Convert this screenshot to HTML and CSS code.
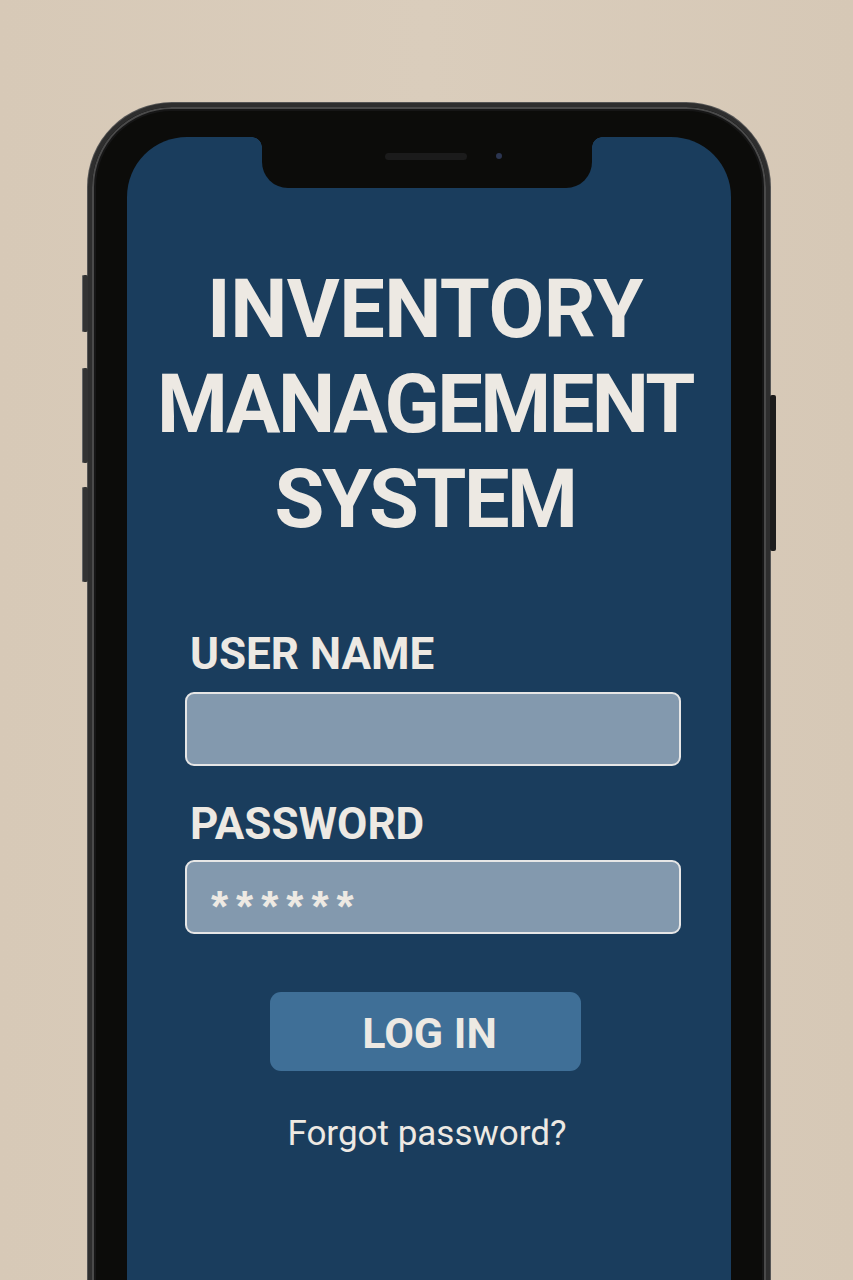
FILE: index.html
```html
<!DOCTYPE html>
<html lang="en">
<head>
<meta charset="utf-8">
<title>Inventory Management System</title>
<link rel="stylesheet" href="styles.css">
</head>
<body>
<div class="stage">
  <div class="phone">
    <span class="btn btn-l1"></span>
    <span class="btn btn-l2"></span>
    <span class="btn btn-l3"></span>
    <span class="btn btn-r1"></span>
    <div class="screen">
      <div class="notch">
        <span class="speaker"></span>
        <span class="camera"></span>
      </div>
      <h1 class="title"><span class="title-wide">INVENTORY</span><br>MANAGEMENT<br>SYSTEM</h1>
      <form class="form">
        <label class="label label-user">USER NAME</label>
        <div class="field"></div>
        <label class="label label-pw">PASSWORD</label>
        <div class="field field-pw">******</div>
        <div class="login">LOG IN</div>
        <div class="forgot">Forgot password?</div>
      </form>
    </div>
  </div>
</div>
</body>
</html>
```

FILE: styles.css
```css
html, body {
  margin: 0;
  padding: 0;
  height: 1280px;
  overflow: hidden;
  background: #d8cab8;
}

.stage {
  padding-top: 103px;
  padding-left: 88px;
  height: 1177px;
  overflow: hidden;
  background: linear-gradient(90deg, #d7c9b7 0%, #dacdbc 50%, #d6c8b6 100%);
}

.phone {
  position: relative;
  box-sizing: border-box;
  width: 682px;
  height: 1300px;
  border-radius: 84px;
  background: #0c0c0a;
  border: 4px solid #2e2e2e;
  box-shadow: inset 0 0 0 2px #4a4a4a, inset 0 0 0 4px #161616, 0 0 0 1px #555;
  padding: 30px 35px 0 35px;
}

.btn {
  position: absolute;
  width: 6px;
  background: #333;
  border-radius: 2px;
  box-shadow: inset 1px 0 0 #666;
}
.btn-l1 { left: -10px; top: 168px; height: 57px; }
.btn-l2 { left: -10px; top: 261px; height: 95px; }
.btn-l3 { left: -10px; top: 380px; height: 95px; }
.btn-r1 { right: -10px; top: 288px; height: 156px; background: #1c1c1c; box-shadow: none; }

.screen {
  position: relative;
  height: 1300px;
  border-radius: 60px 60px 0 0;
  background: #1a3d5d;
  display: flex;
  flex-direction: column;
  align-items: center;
  font-family: Roboto, "Liberation Sans", sans-serif;
  color: #ede9e3;
}

.notch {
  position: absolute;
  top: 0;
  left: 135px;
  width: 330px;
  height: 51px;
  background: #0c0c0a;
  border-radius: 0 0 26px 26px;
}
.notch::before, .notch::after {
  content: "";
  position: absolute;
  top: 0;
  width: 10px;
  height: 10px;
}
.notch::before { left: -10px; background: radial-gradient(circle at 0 100%, transparent 9.5px, #0c0c0a 10px); }
.notch::after { right: -10px; background: radial-gradient(circle at 100% 100%, transparent 9.5px, #0c0c0a 10px); }

.speaker {
  position: absolute;
  left: 123px;
  top: 16px;
  width: 82px;
  height: 7px;
  border-radius: 4px;
  background: #1b1b1b;
}
.camera {
  position: absolute;
  left: 234px;
  top: 16px;
  width: 6px;
  height: 6px;
  border-radius: 50%;
  background: #2b3550;
}

.title {
  margin: 125px 0 0 -8px;
  font-size: 81px;
  line-height: 95px;
  font-weight: 700;
  text-align: center;
  letter-spacing: -2.5px;
}
.title-wide { letter-spacing: -0.5px; }

.form {
  margin-top: 83px;
  width: 496px;
  margin-left: 8px;
  display: flex;
  flex-direction: column;
}

.label {
  font-size: 44px;
  font-weight: 700;
  line-height: 48px;
  padding-left: 5px;
}
.label-user { margin-bottom: 14px; }
.label-pw { margin-top: 34px; margin-bottom: 12px; }

.field {
  box-sizing: border-box;
  height: 74px;
  border: 2.5px solid #e6e6e6;
  border-radius: 9px;
  background: #8399ae;
}
.field-pw {
  padding: 23px 0 0 24px;
  font-family: "Liberation Sans", sans-serif;
  font-size: 44px;
  line-height: 44px;
  letter-spacing: 8px;
  font-weight: 700;
  color: #ede9e3;
}

.login {
  align-self: flex-start;
  box-sizing: border-box;
  margin: 58px 0 0 85px;
  width: 311px;
  height: 79px;
  padding: 3px 0 0 8px;
  border-radius: 11px;
  background: #3f6f97;
  font-size: 43px;
  font-weight: 700;
  line-height: 76px;
  text-align: center;
}

.forgot {
  margin: 43px 0 0 -12px;
  text-align: center;
  font-size: 35px;
  line-height: 40px;
}
```
